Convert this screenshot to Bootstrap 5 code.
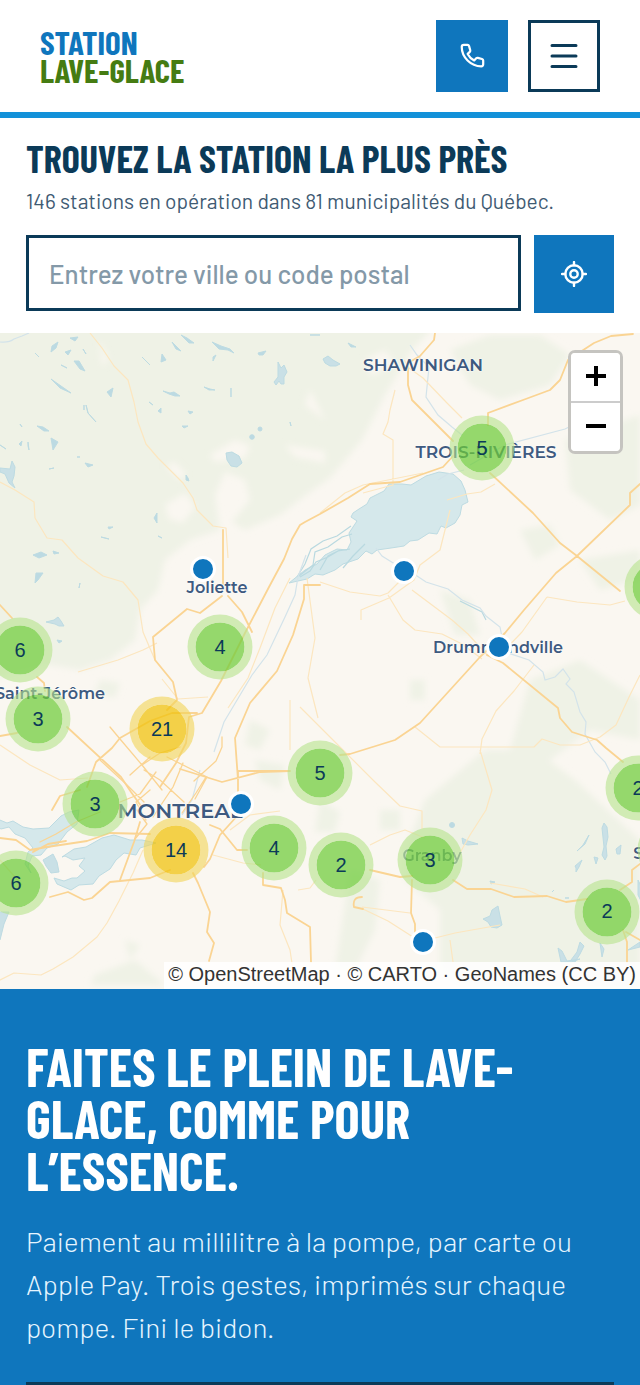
<!DOCTYPE html>
<html lang="fr">
<head>
<meta charset="utf-8">
<meta name="viewport" content="width=device-width, initial-scale=1">
<title>Station Lave-Glace</title>
<link href="https://cdn.jsdelivr.net/npm/bootstrap@5.3.0/dist/css/bootstrap.min.css" rel="stylesheet">
<style>
:root { --navy: #0b3a58; --blue: #0f76bd; --sky: #1391d9; --green: #457c12; }
body { font-family: "Barlow", Roboto, "Liberation Sans", sans-serif; color: var(--navy); background: #fff; }
h1, h2, .brand-name { font-family: "Barlow Condensed", "Roboto Condensed", "Liberation Sans", sans-serif; font-weight: 700; text-transform: uppercase; }
.site-header { padding: 20px 40px; border-bottom: 6px solid var(--sky); }
.brand-name { font-size: 33px; line-height: 28px; color: var(--blue); text-decoration: none; }
.brand-name span { display: block; }
.brand-name .brand-green { color: var(--green); }
.square-btn { width: 72px; height: 72px; border-radius: 0; padding: 0; display: flex; align-items: center; justify-content: center; }
.fill-btn { background: var(--blue); color: #fff; }
.line-btn { border: 3px solid var(--navy); color: var(--navy); background: #fff; }
.finder { padding: 22px 26px 20px; }
.finder h2 { font-size: 38px; line-height: 36px; margin: 0 0 9px; }
.finder p { font-size: 21px; line-height: 32px; color: #3f5b73; margin: 0 0 18px; }
.city-input { border: 3px solid var(--navy); border-radius: 0; height: 76px; padding: 0 20px; font-size: 26px; font-weight: 500; }
.city-input::placeholder { color: #8499a8; opacity: 1; }
.locate-btn { width: 80px; height: 78px; flex: none; }
.map { aspect-ratio: 640 / 656; overflow: hidden; background: #faf7f1; }
.map > svg { width: 100%; height: 100%; display: block; }
.town, .cluster, .pin { position: absolute; left: calc(var(--x) / 640 * 100%); top: calc((var(--y) - 333) / 656 * 100%); transform: translate(-50%, -50%); }
.town { font-family: "Montserrat", "Open Sans", sans-serif; font-weight: 600; font-size: 16px; line-height: 20px; color: #3e5a80; white-space: nowrap; text-shadow: 0 0 2px #fff, 0 0 2px #fff; }
.town.city { font-size: 17px; }
.town.metro { font-size: 21px; line-height: 24px; }
.cluster { width: 65px; height: 65px; border-radius: 50%; border: 8px solid rgba(181, 226, 140, .6); background: rgba(110, 204, 57, .72); background-clip: padding-box; display: flex; align-items: center; justify-content: center; padding-bottom: 2px; font-family: "Liberation Sans", Arial, sans-serif; font-size: 20px; line-height: 24px; color: var(--navy); text-decoration: none; }
.cluster.busy { border-color: rgba(241, 211, 87, .6); background-color: rgba(240, 194, 12, .74); }
.pin { width: 26px; height: 26px; border-radius: 50%; background: var(--blue); border: 3px solid #fff; padding: 0; }
.zoom-box { position: absolute; top: 17px; right: 17px; width: 55px; border: 3px solid #c5c4c0; border-radius: 7px; overflow: hidden; }
.zoom-box button { height: 48px; border: 0; background: #fff; padding: 0 0 2px; display: flex; align-items: center; justify-content: center; }
.zoom-box button + button { height: 50px; border-top: 2px solid #ccc; }
.credits { position: absolute; right: 0; bottom: 0; background: rgba(255, 255, 255, .85); padding: 0 4px 2px; font-family: "Liberation Sans", Arial, sans-serif; font-size: 20px; line-height: 25px; color: #333; white-space: nowrap; }
.credits a { color: inherit; text-decoration: none; }
.pitch { background: var(--blue); color: #fff; padding: 51px 26px 0; }
.pitch h1 { font-size: 53px; line-height: 52px; margin: 0 0 24px; }
.pitch p { font-size: 28px; line-height: 43px; font-weight: 300; color: #e6f5ff; margin: 0 0 33px; }
.pitch hr { margin: 0; border: 0; height: 3px; background: var(--navy); opacity: 1; }
</style>
</head>
<body>
<header class="site-header d-flex align-items-center justify-content-between">
  <a class="brand-name" href="#"><span>Station</span><span class="brand-green">Lave-Glace</span></a>
  <div class="d-flex" style="gap:20px">
    <a class="btn square-btn fill-btn" href="#" aria-label="Téléphone">
      <svg width="28" height="28" viewBox="0 0 24 24" fill="none" stroke="currentColor" stroke-width="1.9" stroke-linecap="round" stroke-linejoin="round"><path d="M5 2.5h3.2c.7 0 1.1.4 1.3 1l1 3.6c.1.6 0 1-.4 1.4L8.300 10.200a13 13 0 0 0 5.600 5.600l1.700-1.800c.4-.4.8-.5 1.400-.4l3.600 1c.6.2 1 .6 1 1.300v3.200c0 1-.7 1.700-1.700 1.700C11 20.800 3.200 13 3.200 4.300c0-1 .8-1.800 1.800-1.800z"/></svg>
    </a>
    <button class="btn square-btn line-btn" type="button" aria-label="Menu">
      <svg width="28" height="26" viewBox="0 0 28 26" stroke="currentColor" stroke-width="3" stroke-linecap="round"><path d="M2 2.500h24M2 13h24M2 23.500h24"/></svg>
    </button>
  </div>
</header>

<main>
<section class="finder">
  <h2>Trouvez la station la plus près</h2>
  <p>146 stations en opération dans 81 municipalités du Québec.</p>
  <form class="d-flex align-items-start" style="gap:13px">
    <input class="form-control city-input" type="text" placeholder="Entrez votre ville ou code postal" aria-label="Entrez votre ville ou code postal">
    <button class="btn square-btn fill-btn locate-btn" type="button" aria-label="Me localiser">
      <svg width="26" height="26" viewBox="0 0 26 26" fill="none" stroke="currentColor" stroke-width="2.400" stroke-linecap="round"><circle cx="13" cy="13" r="8.700"/><circle cx="13" cy="13" r="3.700"/><path d="M13 1v3.300M13 21.700V25M1 13h3.300M21.700 13H25"/></svg>
    </button>
  </form>
</section>

<section class="map position-relative" aria-label="Carte des stations">
  <svg viewBox="0 333 640 656" preserveAspectRatio="none" aria-hidden="true">
    <defs><filter id="soft" x="-10%" y="-10%" width="120%" height="120%"><feGaussianBlur stdDeviation="3"/></filter></defs>
    <!-- woodland -->
    <g fill="#eff2e6" filter="url(#soft)">
      <path d="M-10 320H440L412 350 385 395 362 440 330 478 310 492 280 515 245 530 232 522 250 500 245 480 225 472 215 495 220 530 190 540 165 560 158 590 140 610 135 640 110 660 80 670 50 665 -10 680z"/>
      <path d="M450 350l40-15h50l30 20-20 30-50 15-30-15zM565 440l75-25v90l-30 15-40-30zM520 530l30-5 10 20-25 15zM440 590l30 10 10 35-25 0zM580 560l60-10v30l-40 10zM530 680l50-20 60 40v40l-50-10-40 30-40-10zM405 850l20-50 60-50 50 0 40 30 65 60v150H480l-40-20 0-60-35-30zM350 870l30 10-5 50-20 40h-20zM320 800l20 12-5 20h-20zM410 680l15 0 0 20-15 0z"/>
      <path d="M95 975l40-15 30 25H90zM250 720l20 10-10 20-15-5zM255 760l30 5-5 25-20-10zM100 680l20 3-5 15-20-5zM380 810h20v20h-20zM125 940l15 5-10 15z"/>
    </g>
    <g fill="#faf7f1" filter="url(#soft)"><path d="M210 455l25-15 15 6-5 12-30 4zM285 445l40 6v12l-30-6zM310 390l-5 15 20 15-8-16zM100 340l8 20-6 6zM165 505l20-12 10 14-12 16-14-4zM180 480l-14-14 8-4 12 12zM365 360l20-10 10 14-24 12z"/></g>
    <!-- water -->
    <g fill="#d5e8eb" stroke="#bddbe2" stroke-width="1">
      <path d="M353 513l6-4 8-5 3-6 14-7 5-7 13 0 9 1 15-9 13-4 14 2 8 7 4 9 3 12-6 3-2 10-5 8-9 5-5-2-4 8-8-1-11 7-8 1-6 5-13 2-14 2-5 4-6-3-8 8-15 5-8 6-12 5-8-1-8 5-18 4 16-13 12-6 8-9 12-6 10 1 4-8-2-9 8-12-6-4z"/>
      <path d="M-5 818l12 5 6-2 10 6 10 2 16-1 12-12 8-4 10-2-2 14-10 8-9 12-11 4-6 7-9 1-4 10 3 7-6-9 3-12 5-4-8-10-10-4-6-7-8 2-10-6z"/>
      <path d="M62 857l12-8 12-2 16-9 12-3 16 5 12 0 14 3-16 5-4 7-12-2-8 7-6 9-11 7-6 8-14 1-8 5-14-6-3-6 10 3 8-3 5 0 8-7-6-5 6-8-12 2-8-4z"/>
      <path fill="#c9e0e6" d="M43 860l10-6 4 8 2 10-8 1-5-7zM-5 912l14 0-5 12-4 16-5 2zM0 468l10 1 2-8 3 6-1 9-2 6 3 6-6-5-4-9-5-2zM226 453l6-1 7 4 3 7-5 4-6-1-4-6zM278 362l3 6 3-3 3 7-3 5 0 7-3 0-2-3-3 4-2-3 4-5zM483 919l7-3 2-6 6-4 2 10 2 9-5 3-6-1-3-5zM46 622l8-2 4-3 3 4 3 5-5 0-4-2zM323 359l5-3 5 4 7 4-4 2-6 0-5-3zM602 828l2-5 3 4 1 10-2 9 1 10-2 4-3-5 2-8zM638 880l5 10v15l-5-10zM558 948l4 3 5 10 13-2-9 3-10 0zM571 960l6-8 3-10 4 4-4 8-5 8zM575 866l7-6-3 7-3 5 0-4zM577 851l6-6 6-10-4 9zM594 857l4 1-2 6zM616 849l5-4-1 9-3 0zM600 943l4 6-2 8zM628 950l12-8v5zM462 838l6 3 10 3-10 1-5-1z"/>
      <g fill="#bcdae2">
        <circle cx="260" cy="429" r="2"/><circle cx="252" cy="437" r="2.300"/><circle cx="452" cy="825" r="2.500"/>
        <path d="M52 346l6-4-2 6-5 4zM65 352l6-2-3 5zM74 361l5 0 6 10-5-2zM70 338l8-1-3 4zM83 349l3 5zM35 353l4 4zM61 365l6 3zM163 391l7 2 4-1 6 4-5 0-6-2zM107 392l6-4-2 9zM84 405l0 5zM181 335l6 3 7 5-5 0zM172 342l9 9-5-2zM162 354l4 6-5 2zM212 342l9 4 9 3 4 4-6-3-9-1zM258 353l8-2-3 4-4 0zM213 357l3-2-3 6zM158 411l3-3 0 5zM149 402l4 3zM188 411l5 1-3 2zM182 426l6 0-4 2zM186 475l2 3 1 3-3-1zM154 518l3-5 0 10zM37 426l6 1 6 4-5 0zM51 438l7 4-5 8zM28 442l1 8-1-4zM19 444l3-3-1 5zM85 463l8 2-5 2zM49 469l5-1zM77 457h3zM101 537l8 2zM108 527l5 0-4 2zM33 555l8-3 6 3-8 3zM53 551l6 2-5 1zM158 536l4 2zM36 573l7 0-5 7-3 3zM80 583l-1 5zM57 640l5 1-3 2zM0 445l6 4zM20 424l2 3zM348 343l8 4-5 0zM290 422l1 4zM310 335h10zM490 881l5 1-4 2zM552 892l2-2zM565 898l4 0z"/>
        <path d="M51 379l10 7 10 7-11-5zM86 405l2 8zM88 413l8 9zM204 387l6 2 5 1-6 0zM231 388v9zM142 357l8 8z"/>
      </g>
      <g fill="none" stroke="#d3e3ea" stroke-width="1.200">
        <path stroke="#b9d9e0" d="M297 577l8-13 6-15 12-8 14-5 14-10M299 576l14-11 2-13 13-5 14-10 10-3M300 577l10-6 6-9 12-5 10-6 12-2M320 570l8-14 12-6M343 568l10-12 12-12M460 601l10 5 12 6 4 8"/>
        <path d="M0 342q9 1 14-3l8-3 7-3M306 555l-8 22-3 18-10 22-18 38-15 20-28 47-10 30M438 480l10-6 16-4M410 345l7 10 12 12-3 30 12 18 14 12 10 8M470 465l35-20 60-16 6-3M376 548l6 8 16 10M408 570l18 12 22 7 14 11 18 8 6 8 14 11 2 10M499 650l30 10 14 12 2 8 10-3 8-8 7 10-4 5 8 8 6 20 6 10-1 12 10 18 10 10 6 12M200 770l-8 30-10 15"/>
      </g>
    </g>
    <!-- secondary roads -->
    <g fill="none" stroke="#fce6bf" stroke-width="1.200" stroke-linejoin="round">
      <path d="M90 333l12 15 12 18 14 14 6 22 4 20 8 22 12 14 25 25 10 15 4 12 16 16 13 2 2 30M0 482l15 8 19 12 1 16 12 20 15 2 16 18 25 18 20 6 15 18 5 32 12 28M78 672l40-12 25-10 14-7M395 390l-5 20-2 12-5 12 10 6 0 45-30 8M404 360l5 8 14 10 24 25 15 15M320 513l25-20 18-8 60-12M447 500l20-6 14-2 14-8M450 510l-10 40-20 15-6 15-25 18-28 12 0 10M320 582l30 10 30 4 8-3 14-14M388 595l15 25 12 10 27 4 20 10 20 15M412 590l40 30 16 14 20 22M547 597l-25 35-24 25M547 597l30 5 33 3 15-4M534 665l-20 26-18 20-14 28-2 15M415 727l25 20h94l8-8 18 6 20 0 20-8 16-12 14-30 10-20M480 750l12 40-6 20-16 25-14 25M300 707l30 30 45 45 25 24 22 5 0 18M307 578l8 60-7 40 10 40M290 578l-15 30-15 40-12 30-20 30M290 700l0 50M0 745l30 20 30 15 28-2M370 845l20-10 15-5 20 8M410 913l-48-6M363 909l25 12 25 16 6 0M435 938l20-5 45-8M450 940l3 22M490 883l35 6 18 8M213 855l30 8 18 2M298 890l12-2 6-8M283 890l-3 35 10 25 3 20M143 850l-10 23-14 28-12 22-10 14-24 20-20 12-12 6-27-2-24 12M0 860l22 25M230 830l20-15 30-4M208 697l-30 2-16-20"/>
    </g>
    <!-- highways -->
    <g fill="none" stroke="#fad493" stroke-width="1.800" stroke-linejoin="round" stroke-linecap="round">
      <path d="M435 333l-1 7-14 16-12 7 0 22 4 15 41 41M633 334l-22 2-17 7-26 17-8 20-10 10-27 10-35 13v12M640 484l-10 9v12l-53 51-21 17-32 37-19 23-25 24-60 66-25 17-45 14-10 1M490 473l43 40 27 30 17 13 43 35M487 655l16 8 55 45 2 10 12 14 25 8 9 8 17 14M453 456l-10 11-43 15-30 2-22 14-28 16-15 8-5 3-8 14-8 20-15 28-24 46-24 48-19 32-13 4-3 26-10 20-16 24M197 713l-25 0-22 8-30 17-8 10-16 14-9 25M222 596l-22 17-13-4-34 28 2 23 18 22 4 18-10 10M228 596l14 16 10 20M223 530v54M320 585h-16v14l-11 36-16 36-27 32-15 35 3 42M290 771h-52l0 28M290 771l-30 1-38 10-42-13M0 605l12 13M37 677l7 6 1 8M67 727l54 50 10 15 10 14M0 736l17-3M0 838l16 2 14 10 17-3 40-6 23-8 40 1M33 852l15-8 18-3M50 897l18-5 16 8 8-2 18-16 40-4 20-8M193 873l5 10 12 29-3 20 7 11-5 18M210 825l10 4 17 21h10M238 815l-18 20-10 24-6 8M263 873v12l18 3 4 12 2 13 23 14 1 35M370 870l30 7 12-1M453 880l14 9 24 0 23 8 33-1 19 6 21-3M412 880l-1 33 4 11v13M362 897q-10 0-8 10l9 2M623 930l4 12v20M620 890l12-8v-12l8-6M80 790l-20 6-8 14M120 880l14-38 6-20M640 940l-14-8"/>
      <g stroke-width="1.300"><path d="M110 727l10 12 22 26 20 25M142 765l18-12 20-6M100 760l26 24 18 18M130 775l20-18M144 770l16 10 24 22M167 757l40 20-12 22M222 737v10l-6 14-22 20M183 763l-10 24-20 30M150 790l-14 12 10 18M120 802l20-8 16-22M137 810l10 14-12 15M206 777l-10 16-14 20M100 812l-24 10-20 12-16 8"/></g>
    </g>
  </svg>

  <span class="town city" style="--x:423;--y:365">SHAWINIGAN</span>
  <span class="town city" style="--x:486;--y:452">TROIS-RIVIÈRES</span>
  <span class="town" style="--x:217;--y:588">Joliette</span>
  <span class="town" style="--x:498;--y:648">Drummondville</span>
  <span class="town" style="--x:50;--y:694">Saint-Jérôme</span>
  <span class="town metro" style="--x:180;--y:811">MONTREAL</span>
  <span class="town opacity-75" style="--x:432;--y:856">Granby</span>
  <span class="town" style="--x:681;--y:854">Sherbrooke</span>

  <a class="cluster" href="#" style="--x:482;--y:448">5</a>
  <a class="cluster" href="#" style="--x:657;--y:587" aria-label="Groupe de stations"></a>
  <a class="cluster" href="#" style="--x:670;--y:850" aria-label="Groupe de stations"></a>
  <a class="cluster" href="#" style="--x:220;--y:647">4</a>
  <a class="cluster" href="#" style="--x:20;--y:650">6</a>
  <a class="cluster" href="#" style="--x:38;--y:719">3</a>
  <a class="cluster busy" href="#" style="--x:162;--y:729">21</a>
  <a class="cluster" href="#" style="--x:320;--y:773">5</a>
  <a class="cluster" href="#" style="--x:638;--y:788">2</a>
  <a class="cluster" href="#" style="--x:95;--y:804">3</a>
  <a class="cluster busy" href="#" style="--x:176;--y:850">14</a>
  <a class="cluster" href="#" style="--x:274;--y:848">4</a>
  <a class="cluster" href="#" style="--x:341;--y:865">2</a>
  <a class="cluster" href="#" style="--x:430;--y:860">3</a>
  <a class="cluster" href="#" style="--x:16;--y:883">6</a>
  <a class="cluster" href="#" style="--x:607;--y:912">2</a>

  <button class="pin" type="button" aria-label="Station, Joliette" style="--x:203;--y:569"></button>
  <button class="pin" type="button" aria-label="Station, Nicolet" style="--x:404;--y:571"></button>
  <button class="pin" type="button" aria-label="Station, Drummondville" style="--x:499;--y:647"></button>
  <button class="pin" type="button" aria-label="Station, Longueuil" style="--x:241;--y:804"></button>
  <button class="pin" type="button" aria-label="Station, Cowansville" style="--x:423;--y:942"></button>

  <div class="zoom-box d-flex flex-column">
    <button type="button" aria-label="Zoom avant"><svg width="20" height="20" viewBox="0 0 20 20" stroke="#000" stroke-width="4"><path d="M0 10h20M10 0v20"/></svg></button>
    <button type="button" aria-label="Zoom arrière"><svg width="20" height="20" viewBox="0 0 20 20" stroke="#000" stroke-width="4"><path d="M0 10h20"/></svg></button>
  </div>
  <div class="credits">© <a href="#">OpenStreetMap</a> · © <a href="#">CARTO</a> · <a href="#">GeoNames</a> (CC BY)</div>
</section>

<section class="pitch">
  <h1>Faites le plein de lave-glace, comme pour l’essence.</h1>
  <p>Paiement au millilitre à la pompe, par carte ou Apple Pay. Trois gestes, imprimés sur chaque pompe. Fini le bidon.</p>
  <hr>
</section>
</main>
<script src="https://cdn.jsdelivr.net/npm/bootstrap@5.3.0/dist/js/bootstrap.bundle.min.js"></script>
</body>
</html>
